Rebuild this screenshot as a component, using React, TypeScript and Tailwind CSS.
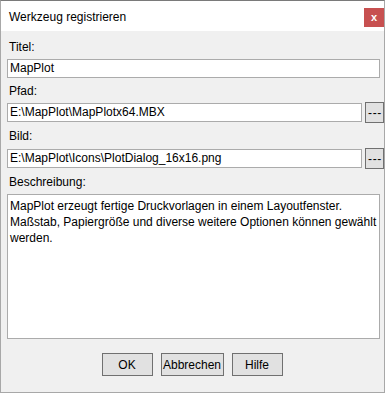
import React from "react";

const font = { fontFamily: '"Liberation Sans", Arial, sans-serif' };

function PathRow({ value }: { value: string }) {
  return (
    <div className="flex items-center">
      <div className="h-[19px] w-[355px] border border-[#ababab] bg-white pl-[2px] text-[12px] leading-[17px] text-black whitespace-nowrap overflow-hidden">
        {value}
      </div>
      <div className="ml-[3px] flex h-[21px] w-[19px] items-center justify-center border border-[#707070] bg-[#e1e1e1] pl-[1px] text-[12px] leading-none tracking-[0.6px] text-black">
        ---
      </div>
    </div>
  );
}

export default function App() {
  return (
    <div className="w-[386px] h-[393px] bg-white" style={font}>
      <div className="flex h-[393px] w-[385px] flex-col border-x border-b border-t border-x-[#a8a8a8] border-b-[#a8a8a8] border-t-[#7a7a7a] bg-[#f0f0f0]">
        <div className="flex h-[30px] items-start justify-between bg-white">
          <div className="pl-[8px] pt-[8px] text-[12px] leading-[16px] text-black">Werkzeug registrieren</div>
          <div className="mt-[7px] flex h-[19px] w-[20px] items-center justify-center bg-[#c75050] text-[11px] font-bold leading-none text-white">
            x
          </div>
        </div>
        <div className="flex flex-col pl-[6px] text-[12px] leading-[16px] text-black">
          <div className="mt-[8px] pl-[2px]">Titel:</div>
          <div className="mt-[4px] h-[19px] w-[373px] border border-[#ababab] bg-white pl-[2px] leading-[17px]">MapPlot</div>
          <div className="mt-[5px] pl-[2px]">Pfad:</div>
          <div className="mt-[3px]">
            <PathRow value="E:\MapPlot\MapPlotx64.MBX" />
          </div>
          <div className="mt-[5px] pl-[2px]">Bild:</div>
          <div className="mt-[4px]">
            <PathRow value="E:\MapPlot\Icons\PlotDialog_16x16.png" />
          </div>
          <div className="mt-[5px] pl-[2px]">Beschreibung:</div>
          <div className="mt-[4px] h-[145px] w-[373px] border border-[#ababab] bg-white pl-[2px] pt-[3px]">
            MapPlot erzeugt fertige Druckvorlagen in einem Layoutfenster.
            <br />
            Maßstab, Papiergröße und diverse weitere Optionen können gewählt
            <br />
            werden.
          </div>
        </div>
        <div className="mt-[14px] flex justify-center gap-[8px] pr-[1px] text-[12px] text-black">
          <div className="flex h-[23px] w-[51px] items-center justify-center border border-[#707070] bg-[#e1e1e1]">OK</div>
          <div className="flex h-[23px] w-[63px] items-center justify-center border border-[#707070] bg-[#e1e1e1]">Abbrechen</div>
          <div className="flex h-[23px] w-[51px] items-center justify-center border border-[#707070] bg-[#e1e1e1]">Hilfe</div>
        </div>
      </div>
    </div>
  );
}
